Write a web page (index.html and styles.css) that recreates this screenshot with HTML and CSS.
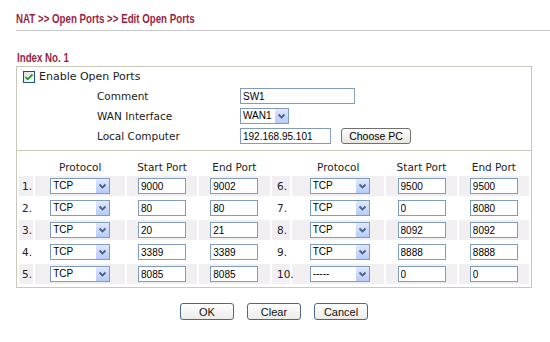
FILE: index.html
```html
<!DOCTYPE html>
<html lang="en">

<head>
    <meta charset="UTF-8">
    <title>NAT - Edit Open Ports</title>
    <link rel="stylesheet" href="styles.css">
</head>

<body>

    <div class="page">

        <h1 class="titulo"><span class="estreito">NAT &gt;&gt; Open Ports &gt;&gt; Edit Open Ports</span></h1>

        <h2 class="indice"><span class="estreito">Index No. 1</span></h2>

        <div class="caixa">

            <div class="geral">
                <div class="linha linha-check">
                    <span class="check">
                        <svg width="12" height="12" viewBox="0 0 12 12"><polyline points="2.5,6 4.8,8.3 9.5,3.5" fill="none" stroke="#21a121" stroke-width="1.8"/></svg>
                    </span>
                    <span>Enable Open Ports</span>
                </div>
                <div class="linha">
                    <span class="rotulo">Comment</span>
                    <input type="text" class="campo campo-comment" value="SW1">
                </div>
                <div class="linha">
                    <span class="rotulo">WAN Interface</span>
                    <div class="select select-wan"><span class="valor">WAN1</span><span class="seta"><svg width="13" height="14" viewBox="0 0 13 14"><polyline points="3.5,5.5 6.5,8.5 9.5,5.5" fill="none" stroke="#4d6185" stroke-width="1.8"/></svg></span></div>
                </div>
                <div class="linha">
                    <span class="rotulo">Local Computer</span>
                    <input type="text" class="campo campo-local" value="192.168.95.101">
                    <button class="botao-pc">Choose PC</button>
                </div>
            </div>

            <table class="portas">
                <colgroup>
                    <col style="width:14px">
                    <col style="width:90px">
                    <col style="width:69px">
                    <col style="width:71px">
                    <col style="width:18px">
                    <col style="width:92px">
                    <col style="width:70px">
                    <col style="width:70px">
                </colgroup>
                <thead>
                    <tr>
                        <th></th>
                        <th>Protocol</th>
                        <th>Start Port</th>
                        <th>End Port</th>
                        <th></th>
                        <th>Protocol</th>
                        <th>Start Port</th>
                        <th>End Port</th>
                    </tr>
                </thead>
                <tbody id="linhas"></tbody>
            </table>

        </div>

        <div class="botoes">
            <button class="botao">OK</button>
            <button class="botao">Clear</button>
            <button class="botao">Cancel</button>
        </div>

    </div>

    <script>
        const portas = [
            { n: '1.', proto: 'TCP', ini: '9000', fim: '9002' },
            { n: '2.', proto: 'TCP', ini: '80', fim: '80' },
            { n: '3.', proto: 'TCP', ini: '20', fim: '21' },
            { n: '4.', proto: 'TCP', ini: '3389', fim: '3389' },
            { n: '5.', proto: 'TCP', ini: '8085', fim: '8085' },
            { n: '6.', proto: 'TCP', ini: '9500', fim: '9500' },
            { n: '7.', proto: 'TCP', ini: '0', fim: '8080' },
            { n: '8.', proto: 'TCP', ini: '8092', fim: '8092' },
            { n: '9.', proto: 'TCP', ini: '8888', fim: '8888' },
            { n: '10.', proto: '-----', ini: '0', fim: '0' },
        ];

        const seta = '<span class="seta"><svg width="13" height="14" viewBox="0 0 13 14"><polyline points="3.5,5.5 6.5,8.5 9.5,5.5" fill="none" stroke="#4d6185" stroke-width="1.8"/></svg></span>';

        function celulas(p, lado) {
            return `<td class="num ${lado}">${p.n}</td>` +
                `<td class="proto ${lado}"><div class="select"><span class="valor">${p.proto}</span>${seta}</div></td>` +
                `<td><input type="text" class="campo porta" value="${p.ini}"></td>` +
                `<td><input type="text" class="campo porta" value="${p.fim}"></td>`;
        }

        let html = '';
        for (let i = 0; i < 5; i++) {
            const classe = i % 2 === 0 ? 'impar' : '';
            html += `<tr class="${classe}">${celulas(portas[i], 'esq')}${celulas(portas[i + 5], 'dir')}</tr>`;
        }
        document.getElementById('linhas').innerHTML = html;
    </script>
</body>

</html>
```

FILE: styles.css
```css
body {
    margin: 0;
    font-family: "DejaVu Sans", Verdana, sans-serif;
    font-size: 10.5px;
    color: #222;
    background: #fff;
}

.page {
    padding: 12px 0 0 16px;
}

.estreito {
    display: inline-block;
    transform: scaleX(0.81);
    transform-origin: 0 50%;
    white-space: nowrap;
}

.titulo {
    margin: 0;
    padding-bottom: 4px;
    font-family: "Liberation Sans", Arial, sans-serif;
    font-size: 12px;
    line-height: 14px;
    font-weight: bold;
    color: #9b1f45;
    border-bottom: 1px solid #c8c8c8;
}

.indice {
    margin: 20px 0 1px 1px;
    font-family: "Liberation Sans", Arial, sans-serif;
    font-size: 12px;
    line-height: 14px;
    font-weight: bold;
    color: #9b1f45;
}

.caixa {
    width: 516px;
    box-sizing: border-box;
    border: 1px solid #c9c9b9;
    padding-bottom: 1px;
}

.geral {
    padding-bottom: 4px;
    border-bottom: 1px solid #c9c9b9;
}

.linha {
    display: flex;
    align-items: center;
    height: 20px;
    padding-left: 80px;
}

.linha-check {
    height: 19px;
    padding-left: 6px;
    gap: 4px;
    font-size: 11px;
}

.check {
    width: 12px;
    height: 12px;
    box-sizing: border-box;
    border: 1px solid #1c5180;
    background: linear-gradient(135deg, #dcdcd7, #fff);
    display: flex;
    align-items: center;
    justify-content: center;
}

.check svg {
    display: block;
    margin: -1px;
}

.rotulo {
    width: 143px;
}

.campo {
    box-sizing: border-box;
    height: 16px;
    margin: 0;
    padding: 0 2px;
    border: 1px solid #7f9db9;
    font-family: "Liberation Sans", Arial, sans-serif;
    font-size: 10px;
    color: #000;
    background: #fff;
    outline: none;
}

.campo-comment {
    width: 115px;
}

.campo-local {
    width: 91px;
}

.botao-pc {
    margin-left: 10px;
    width: 70px;
    height: 16px;
    padding: 0;
    border: 1px solid #707070;
    border-radius: 3px;
    background: linear-gradient(#fff, #e6e5de);
    font-family: "Liberation Sans", Arial, sans-serif;
    font-size: 10.5px;
    color: #000;
}

.select {
    display: inline-flex;
    align-items: center;
    box-sizing: border-box;
    width: 60px;
    height: 16px;
    border: 1px solid #7f9db9;
    background: #fff;
    font-family: "Liberation Sans", Arial, sans-serif;
    font-size: 10px;
    color: #000;
    text-align: left;
    vertical-align: middle;
}

.select-wan {
    width: 49px;
}

.select .valor {
    flex: 1;
    padding-left: 2px;
    line-height: 14px;
}

.seta {
    width: 13px;
    height: 14px;
    background: linear-gradient(#dfe8fd, #b7cbf8);
    border-left: 1px solid #fff;
}

.seta svg {
    display: block;
}

.portas {
    width: 100%;
    table-layout: fixed;
    border-spacing: 2px;
}

.portas th {
    height: 20px;
    padding: 0 0 1px;
    vertical-align: bottom;
    font-weight: normal;
    text-align: center;
}

.portas td {
    height: 20px;
    padding: 0;
    text-align: center;
}

.portas tr.impar td {
    background: #f2eff3;
}

.portas td.num {
    text-align: left;
    padding-left: 3px;
}

.portas td.num.dir {
    padding-left: 5px;
}

.portas td.proto.dir {
    padding-left: 3px;
}

.porta {
    width: 48px;
    vertical-align: middle;
}

.botoes {
    display: flex;
    justify-content: center;
    gap: 13px;
    width: 516px;
    margin-top: 15px;
}

.botao {
    width: 54px;
    height: 17px;
    padding: 0;
    border: 1px solid #4a6888;
    border-radius: 3px;
    background: linear-gradient(#fff, #ecebe6);
    font-family: "Liberation Sans", Arial, sans-serif;
    font-size: 11px;
    color: #111;
}
```
